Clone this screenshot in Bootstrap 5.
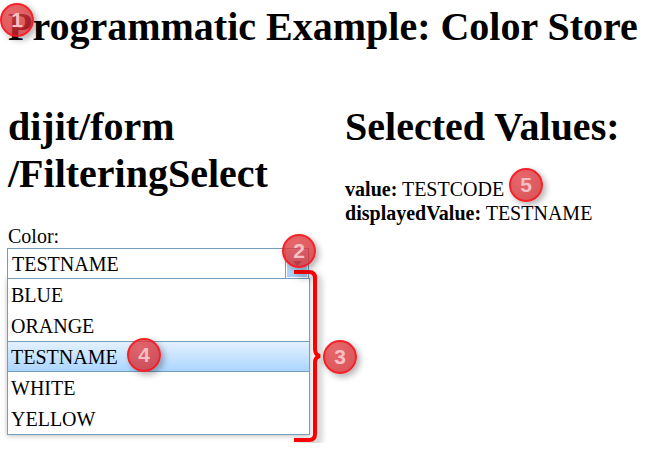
<!DOCTYPE html>
<html lang="en">
<head>
<meta charset="utf-8">
<meta name="viewport" content="width=device-width, initial-scale=1">
<title>Programmatic Example: Color Store</title>
<link href="https://cdn.jsdelivr.net/npm/bootstrap@5.3.0/dist/css/bootstrap.min.css" rel="stylesheet">
<style>
  body { font-family: "Liberation Serif", "Times New Roman", serif; font-size: 20px; line-height: 24px; color: #000; background: #fff; }
  main { padding: 3px 9px 8px 8px; }
  h1, h2 { font-size: 40px; line-height: 47px; font-weight: 700; color: #000; margin: 0; }
  h1 { margin-bottom: 53px; white-space: nowrap; }
  h2 { margin-bottom: 27px; }
  .pane-left { width: 53%; }
  .filter-select { width: 303px; margin-left: -1px; }
  .combo { height: 30px; border: 1px solid #759dc0; border-bottom: 0; margin-right: 1px; }
  .combo input { border: 0; outline: 0; padding: 0 4px; color: #000; min-width: 0; background: #fff; }
  .combo button { width: 22px; border: 1px solid #fff; box-shadow: -1px 0 #759dc0; background: linear-gradient(#d8ecff, #a5d0f9) padding-box; padding: 0; }
  .option-list { border: 1px solid #759dc0; background: #fff; box-shadow: 0 1px 5px rgba(0,0,0,.25); }
  .option { height: 31px; border: 0; border-top: 1px solid transparent; border-bottom: 1px solid transparent; padding: 0 3px; background: none; color: #000; text-align: left; }
  .option.chosen { border-color: #759dc0; background: linear-gradient(#e4f1ff, #abd6ff); }
  .callout-dot { position: absolute; z-index: 3; width: 34px; height: 34px; border-radius: 50%; border: 2px solid rgba(250,20,28,.8); background: radial-gradient(circle at 35% 25%, rgba(224,70,75,.82), rgba(205,28,34,.76)); color: #f3c0c5; font: 700 21px/30px "Liberation Sans", Arial, sans-serif; text-align: center; box-shadow: 3px 3px 6px rgba(0,0,0,.3); }
  .dot-title { left: -8px; top: 0; }
  .dot-arrow { right: -6px; top: -14px; }
  .dot-list { left: 316px; top: 92px; }
  .dot-choice { left: 119px; top: -4px; }
  .dot-value { left: 164px; top: -9px; }
  .bracket { position: absolute; z-index: 2; left: 286px; top: 20px; overflow: visible; filter: drop-shadow(4px 4px 3px rgba(0,0,0,.3)); pointer-events: none; }
</style>
<script src="https://cdn.jsdelivr.net/npm/bootstrap@5.3.0/dist/js/bootstrap.bundle.min.js" defer></script>
</head>
<body>
<main>
  <h1 class="position-relative">Programmatic Example: Color Store<span class="callout-dot dot-title">1</span></h1>
  <div class="d-flex">
    <section class="pane-left flex-shrink-0">
      <h2>dijit/form<br>/FilteringSelect</h2>
      <label class="d-block" for="color">Color:</label>
      <div class="filter-select position-relative">
        <div class="combo d-flex">
          <input class="flex-grow-1" id="color" type="text" value="TESTNAME" role="combobox" aria-expanded="true" aria-controls="colors">
          <button type="button" aria-label="Show colors"><svg class="d-block mx-auto" width="9" height="5" viewBox="0 0 9 5" aria-hidden="true"><path d="M0 0h9L4.500 5z" fill="#4f7596"/></svg></button>
        </div>
        <div class="option-list d-flex flex-column" id="colors" role="listbox">
          <button type="button" class="option" role="option">BLUE</button>
          <button type="button" class="option" role="option">ORANGE</button>
          <button type="button" class="option chosen position-relative" role="option" aria-selected="true">TESTNAME<span class="callout-dot dot-choice">4</span></button>
          <button type="button" class="option" role="option">WHITE</button>
          <button type="button" class="option" role="option">YELLOW</button>
        </div>
        <span class="callout-dot dot-arrow">2</span>
        <svg class="bracket" width="32" height="176" viewBox="0 0 32 176" fill="none" stroke="#f00" stroke-width="4" aria-hidden="true"><path d="M1 4H16Q22 4 22 10V81Q22 87 27 88Q22 89 22 95V166Q22 172 16 172H1"/></svg>
        <span class="callout-dot dot-list">3</span>
      </div>
    </section>
    <section class="flex-grow-1">
      <h2>Selected Values:</h2>
      <div class="position-relative"><b>value:</b> TESTCODE<span class="callout-dot dot-value">5</span></div>
      <div><b>displayedValue:</b> TESTNAME</div>
    </section>
  </div>
</main>
</body>
</html>
